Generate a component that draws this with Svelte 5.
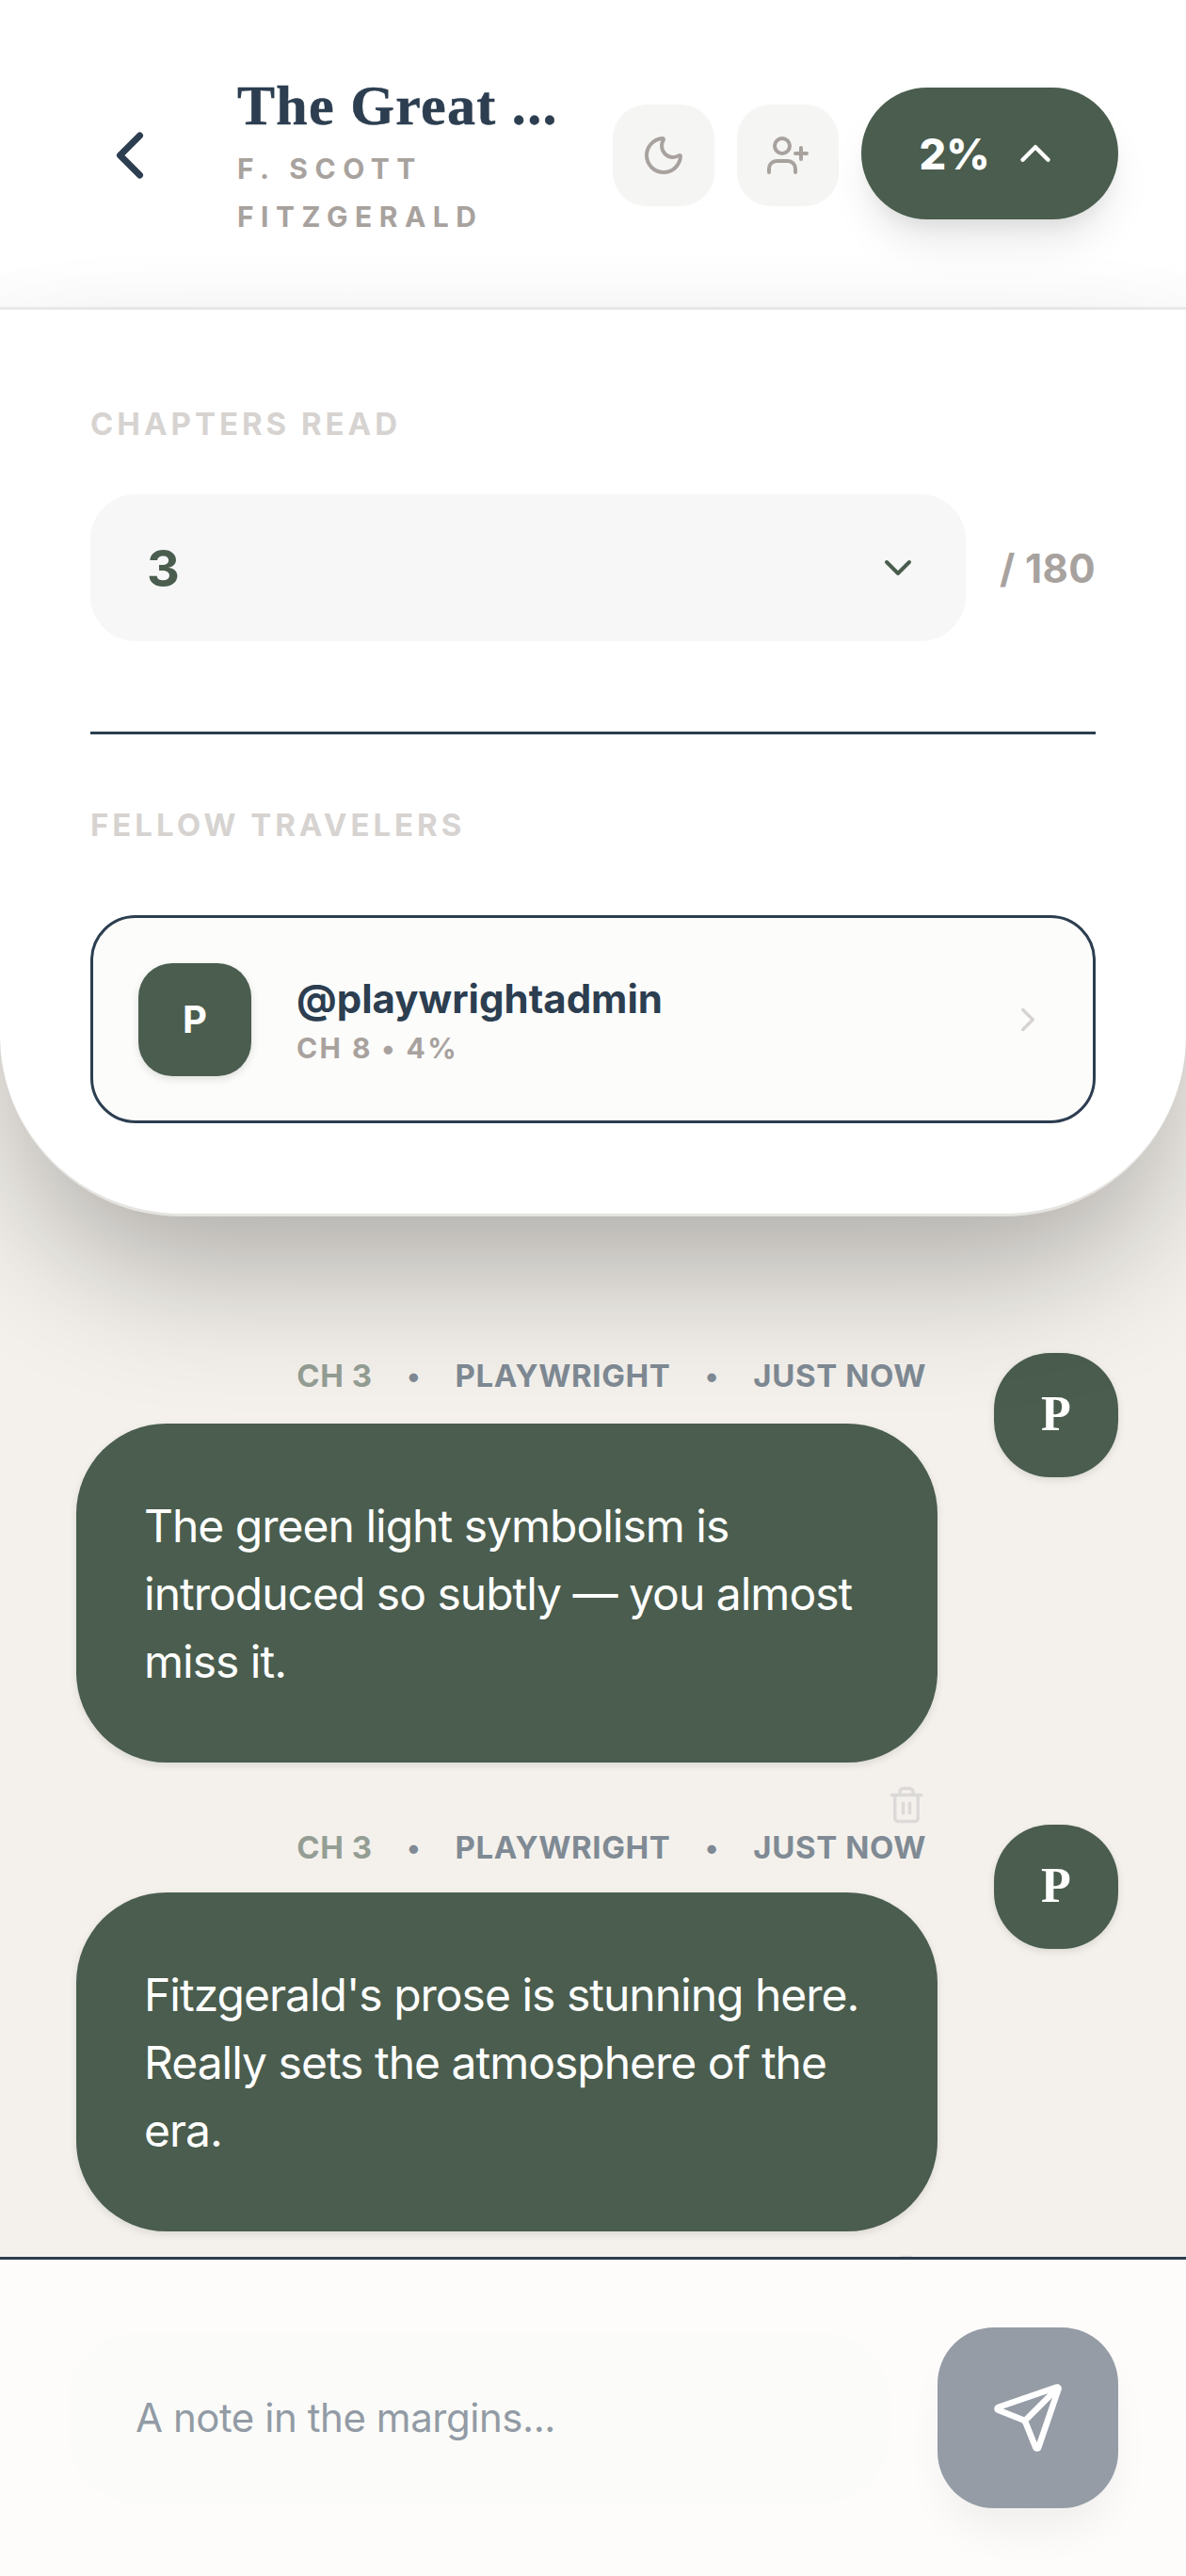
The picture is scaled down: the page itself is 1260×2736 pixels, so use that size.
<script>
  const messages = [
    { text: "The green light symbolism is introduced so subtly — you almost miss it." },
    { text: "Fitzgerald's prose is stunning here. Really sets the atmosphere of the era." }
  ];
</script>

<div class="page">
  <header class="header">
    <button class="back" aria-label="Back">
      <svg viewBox="0 0 24 24" width="84" height="84"><path d="m15 18-6-6 6-6" /></svg>
    </button>
    <div class="titles">
      <h1>The Great ...</h1>
      <p>F. SCOTT FITZGERALD</p>
    </div>
    <div class="actions">
      <button class="tool" aria-label="Theme">
        <svg viewBox="0 0 24 24" width="48" height="48"><path d="M20.985 12.486a9 9 0 1 1-9.473-9.472c.405-.022.617.46.402.803a6 6 0 0 0 8.268 8.268c.344-.215.825-.004.803.401" /></svg>
      </button>
      <button class="tool" aria-label="Invite">
        <svg viewBox="0 0 24 24" width="48" height="48"><path d="M16 21v-2a4 4 0 0 0-4-4H6a4 4 0 0 0-4 4v2" /><circle cx="9" cy="7" r="4" /><path d="M19 8v6M22 11h-6" /></svg>
      </button>
      <button class="pill">
        <span>2%</span>
        <svg viewBox="0 0 24 24" width="54" height="54"><path d="m18 15-6-6-6 6" /></svg>
      </button>
    </div>
  </header>

  <section class="panel">
    <div class="label chapters">CHAPTERS READ</div>
    <div class="select-row">
      <div class="select">
        <span>3</span>
        <svg viewBox="0 0 24 24" width="48" height="48"><path d="m6 9 6 6 6-6" /></svg>
      </div>
      <span class="total">/ 180</span>
    </div>
    <div class="rule"></div>
    <div class="label fellows">FELLOW TRAVELERS</div>
    <div class="card">
      <div class="card-avatar">P</div>
      <div class="card-text">
        <div class="handle">@playwrightadmin</div>
        <div class="progress">CH 8 • 4%</div>
      </div>
      <svg class="card-chev" viewBox="0 0 24 24" width="42" height="42"><path d="m9 18 6-6-6-6" /></svg>
    </div>
  </section>

  <main class="feed">
    {#each messages as m}
      <article class="msg">
        <div class="col">
          <div class="meta">
            <span class="ch">CH 3</span><i>•</i><span class="who">PLAYWRIGHT</span><i>•</i><span class="when">JUST NOW</span>
          </div>
          <div class="bubble">{m.text}</div>
          <svg class="trash" viewBox="0 0 24 24" width="42" height="42"><path d="M3 6h18M19 6v14c0 1-1 2-2 2H7c-1 0-2-1-2-2V6M8 6V4c0-1 1-2 2-2h4c1 0 2 1 2 2v2M10 11v6M14 11v6" /></svg>
        </div>
        <div class="avatar">P</div>
      </article>
    {/each}
  </main>

  <footer class="composer">
    <div class="input">A note in the margins...</div>
    <button class="send" aria-label="Send">
      <svg viewBox="0 0 24 24" width="78" height="78"><path d="M14.536 21.686a.5.5 0 0 0 .937-.024l6.5-19a.496.496 0 0 0-.635-.635l-19 6.5a.5.5 0 0 0-.024.937l7.93 3.18a2 2 0 0 1 1.112 1.11z" /><path d="m21.854 2.147-10.94 10.939" /></svg>
    </button>
  </footer>
</div>

<style>
  :global(body) { margin: 0; }
  * { box-sizing: border-box; }
  svg { fill: none; stroke: currentColor; stroke-width: 2; stroke-linecap: round; stroke-linejoin: round; display: block; }
  button { border: 0; padding: 0; font: inherit; background: none; }
  .page {
    width: 1260px; height: 2736px; overflow: hidden;
    display: flex; flex-direction: column;
    background: #f4f1ec;
    font-family: Inter, "Liberation Sans", sans-serif;
    color: #2c3e50;
  }
  .header {
    height: 329px; flex: none;
    display: flex; align-items: center;
    padding: 0 72px 0 96px;
    background: linear-gradient(#fff 85%, #fcfcfc);
    border-bottom: 3px solid #ececea;
  }
  .back { width: 84px; height: 84px; color: #2c3e50; flex: none; margin-top: 3px; }
  .titles { margin-left: 72px; margin-top: 6px; width: 345px; flex: none; }
  h1 { margin: 0; font: 700 60px/72px "Liberation Serif", serif; letter-spacing: 1.3px; -webkit-text-stroke: 0.5px #2c3e50; color: #2c3e50; white-space: nowrap; }
  .titles p { margin: 6px 0 0; font-size: 30px; line-height: 51px; font-weight: 700; letter-spacing: 7.5px; color: #a8a29e; }
  .actions { margin-left: auto; display: flex; align-items: center; gap: 24px; }
  .tool { width: 108px; height: 108px; margin-top: 3px; border-radius: 36px; background: #f5f5f4; color: #a8a29e; display: flex; align-items: center; justify-content: center; }
  .pill {
    width: 273px; height: 140px; border-radius: 70px; background: #4a5d4e; color: #fff;
    display: flex; align-items: center; justify-content: center; gap: 21px;
    font-size: 45px; font-weight: 800;
    box-shadow: 0 30px 45px -9px rgba(0,0,0,.1), 0 12px 18px -6px rgba(0,0,0,.06);
  }

  .panel {
    height: 963px; flex: none; position: relative; z-index: 2;
    padding: 0 96px;
    background: #fff;
    border-radius: 0 0 192px 192px;
    border-bottom: 3px solid #e5e4e1;
    box-shadow: 0 75px 150px -24px rgba(0,0,0,.3);
  }
  .label { font-size: 33px; line-height: 48px; font-weight: 700; letter-spacing: 3.96px; color: #d6d3d1; }
  .chapters { padding-top: 97px; height: 145px; }
  .select-row { margin-top: 51px; display: flex; align-items: center; gap: 36px; }
  .select {
    flex: 1; height: 156px; border-radius: 48px; background: #f7f7f7;
    display: flex; align-items: center; justify-content: space-between;
    padding: 0 48px 0 60px;
    color: #4a5d4e; font-size: 54px; font-weight: 700;
  }
  .total { width: 102px; font-size: 42px; font-weight: 700; letter-spacing: 0.4px; color: #a8a29e; white-space: nowrap; }
  .rule { height: 3px; margin-top: 96px; background: #2c3e50; }
  .fellows { margin-top: 72px; }
  .card {
    margin-top: 72px; height: 221px; border: 3px solid #2c3e50; border-radius: 48px; background: #fcfcfb;
    display: flex; align-items: center; padding: 0 48px;
  }
  .card-avatar {
    width: 120px; height: 120px; border-radius: 36px; background: #4a5d4e; color: #fff;
    display: flex; align-items: center; justify-content: center;
    font-size: 40px; font-weight: 700;
    box-shadow: 0 3px 9px rgba(0,0,0,.12);
  }
  .card-text { margin-left: 48px; flex: 1; padding-top: 3px; }
  .handle { font-size: 42px; line-height: 54px; font-weight: 700; color: #2c3e50; }
  .progress { font-size: 30px; line-height: 42px; margin-top: 4px; font-weight: 700; letter-spacing: 2.4px; color: #a8a29e; }
  .card-chev { color: #d6d3d1; }

  .feed { flex: 1; padding: 145px 72px 0 81px; min-height: 0; overflow: hidden; }
  .msg { display: flex; align-items: flex-start; gap: 60px; height: 501px; }
  .col { width: 915px; position: relative; flex: none; }
  .meta {
    height: 48px; display: flex; justify-content: flex-end; align-items: center; gap: 36.5px;
    padding-right: 12px; margin-bottom: 27px;
    font-size: 33px; font-weight: 700; letter-spacing: 0.6px;
  }
  .msg:last-child .meta { margin-bottom: 24px; }
  .meta i { font-style: normal; color: #7f8a94; font-size: 30px; }
  .ch { color: #949e94; }
  .who, .when { color: #7f8a94; }
  .bubble {
    height: 360px; border-radius: 96px; background: #4a5d4e; color: #fff;
    padding: 73px 72px 0;
    font-size: 48px; line-height: 72px; letter-spacing: -1px;
    box-shadow: 0 3px 9px rgba(0,0,0,.1);
  }
  .trash { position: absolute; right: 12px; bottom: -66px; color: #dcdad8; }
  .avatar {
    width: 132px; height: 132px; border-radius: 60px; background: #4a5d4e; color: #fff; flex: none;
    display: flex; align-items: center; justify-content: center; padding-bottom: 4px;
    font: 700 52px "Liberation Serif", serif;
    box-shadow: 0 3px 9px rgba(0,0,0,.1);
  }

  .composer {
    height: 339px; flex: none; position: relative;
    border-top: 3px solid #2c3e50;
    background: #fdfcfb;
    display: flex; align-items: flex-start;
    padding: 72px 72px 0;
  }
  .input {
    width: 875px; height: 180px; margin-top: 6px; border-radius: 72px; background: #fbfbf9;
    padding-left: 72px; padding-bottom: 2px; display: flex; align-items: center;
    font-size: 42px; letter-spacing: -0.45px; color: #929ba5;
  }
  .send {
    margin-left: 50px; width: 192px; height: 192px; border-radius: 60px; background: #959ca6; color: #fff;
    display: flex; align-items: center; justify-content: center;
    box-shadow: 0 30px 45px -9px rgba(0,0,0,.06);
  }
</style>
